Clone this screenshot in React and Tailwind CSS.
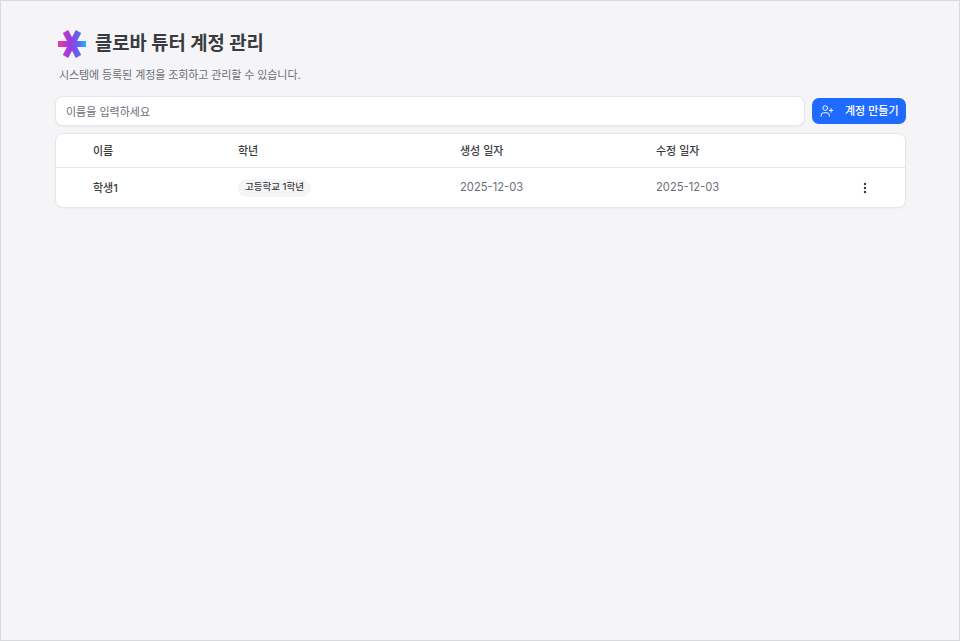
import React from 'react';
import { UserPlus, EllipsisVertical } from 'lucide-react';

const font = "font-['Inter','Noto_Sans_CJK_KR',sans-serif]";
const columns = 'grid grid-cols-[145px_222px_196px_1fr_50px] items-center pl-[37px]';

const Logo = () => (
  <svg width="28" height="28" viewBox="0 0 28 28" className="shrink-0">
    <defs>
      <linearGradient id="logoGrad" gradientUnits="userSpaceOnUse" x1="0" y1="0" x2="28" y2="0">
        <stop offset="0" stopColor="#e83aa6" />
        <stop offset="0.45" stopColor="#9a3be0" />
        <stop offset="0.75" stopColor="#5a68f0" />
        <stop offset="1" stopColor="#1fbcfb" />
      </linearGradient>
    </defs>
    <g fill="url(#logoGrad)">
      <path d="M0 11h28v6H0z" />
      <path d="M10.2 0.1 4.8 2.9 17.8 27.9 23.2 25.1z" />
      <path d="M17.8 0.1 23.2 2.9 10.2 27.9 4.8 25.1z" />
    </g>
  </svg>
);

const App = () => {
  return (
    <div className={`${font} min-h-[641px] bg-[#f5f5f8] border border-[#d8d9dd] pl-[54px] pr-[53px] pt-[28px]`}>
      <div className="flex items-center gap-[9px] pl-[3px]">
        <Logo />
        <h1 className="text-[18.8px] leading-[30px] font-bold text-[#3a3b40]">클로바 튜터 계정 관리</h1>
      </div>
      <p className="mt-[7px] pl-[4px] text-[11px] tracking-[-0.1px] leading-[18px] text-[#6b6e76]">
        시스템에 등록된 계정을 조회하고 관리할 수 있습니다.
      </p>

      <div className="mt-[12px] flex items-center gap-[7px]">
        <input
          placeholder="이름을 입력하세요"
          className="flex-1 h-[30px] rounded-[8px] bg-white border border-[#e6e7ea] shadow-[0_1px_2px_rgba(0,0,0,0.05)] pt-[1px] px-[10px] text-[11px] placeholder:text-[#6b6e76] outline-none"
        />
        <button className="w-[94px] h-[26px] rounded-[7px] bg-[#1f6bff] text-white flex items-center pl-[8px] text-[11px] font-medium">
          <UserPlus size={14} strokeWidth={1.6} />
          <span className="ml-[11px]">계정 만들기</span>
        </button>
      </div>

      <div className="mt-[7px] rounded-[8px] bg-white border border-[#e6e7ea] shadow-[0_1px_2px_rgba(0,0,0,0.03)]">
        <div className={`${columns} h-[34px] pt-[1px] text-[11px] font-medium text-[#3a3b40] border-b border-[#e6e7ea]`}>
          <span>이름</span>
          <span>학년</span>
          <span>생성 일자</span>
          <span>수정 일자</span>
          <span />
        </div>
        <div className={`${columns} h-[39px]`}>
          <span className="pt-[1px] text-[11px] font-medium text-[#3a3b40]">학생1</span>
          <span className="flex">
            <span className="flex items-center h-[18px] px-[7px] rounded-[9px] bg-[#f5f5f8] text-[9.5px] font-medium text-[#3a3b40]">
              고등학교 1학년
            </span>
          </span>
          <span className="text-[11.2px] text-[#6b6e76]">2025-12-03</span>
          <span className="text-[11.2px] text-[#6b6e76]">2025-12-03</span>
          <span className="flex pl-[3px]">
            <EllipsisVertical size={14} strokeWidth={2.2} className="text-[#3a3b40]" />
          </span>
        </div>
      </div>
    </div>
  );
};

export default App;
